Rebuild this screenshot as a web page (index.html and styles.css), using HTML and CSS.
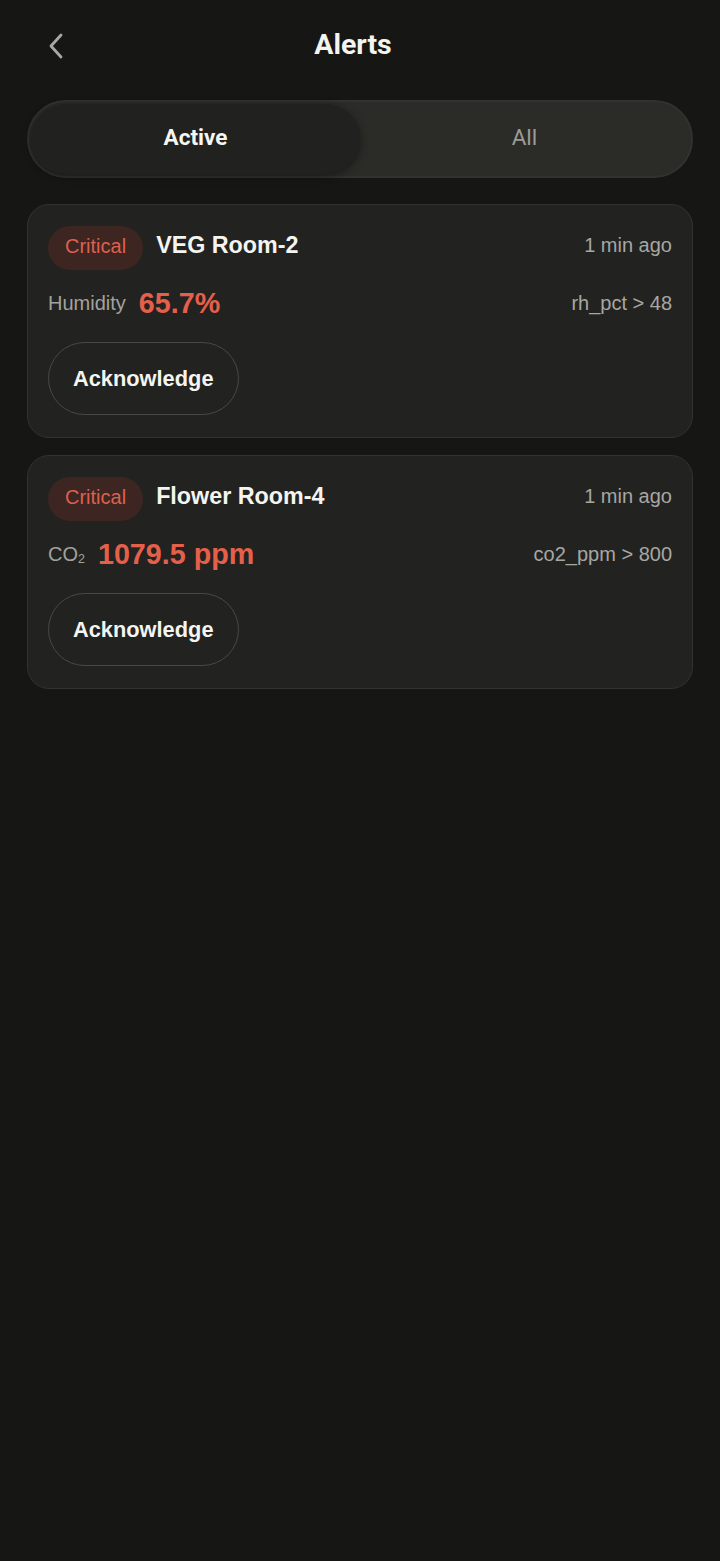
FILE: index.html
```html
<!DOCTYPE html>
<html lang="en">
<head>
    <meta charset="UTF-8">
    <meta name="viewport" content="width=device-width, initial-scale=1.0">
    <title>Alerts</title>
    <link rel="stylesheet" href="styles.css">
</head>
<body>
<header class="topbar">
    <button class="back" aria-label="Back">
        <svg width="18" height="26" viewBox="0 0 18 26"><path d="M14 2 L4 13 L14 24" fill="none" stroke="#a9a9a4" stroke-width="2.8" stroke-linecap="round" stroke-linejoin="round"/></svg>
    </button>
    <h1>Alerts</h1>
</header>

<div class="tabs">
    <div class="tab active">Active</div>
    <div class="tab">All</div>
</div>

<section class="alerts">
    <div class="card">
        <div class="card-head">
            <span class="badge">Critical</span>
            <span class="room">VEG Room-2</span>
            <span class="time">1 min ago</span>
        </div>
        <div class="card-metric">
            <span class="label">Humidity</span>
            <span class="value">65.7%</span>
            <span class="rule">rh_pct &gt; 48</span>
        </div>
        <button class="ack">Acknowledge</button>
    </div>

    <div class="card">
        <div class="card-head">
            <span class="badge">Critical</span>
            <span class="room">Flower Room-4</span>
            <span class="time">1 min ago</span>
        </div>
        <div class="card-metric">
            <span class="label">CO<sub>2</sub></span>
            <span class="value">1079.5 ppm</span>
            <span class="rule">co2_ppm &gt; 800</span>
        </div>
        <button class="ack">Acknowledge</button>
    </div>
</section>
</body>
</html>
```

FILE: styles.css
```css
body {
    margin: 0;
    background-color: #161614;
    color: #f2f2ee;
    font-family: 'Liberation Sans', Arial, sans-serif;
}

.topbar {
    position: relative;
    height: 88px;
    padding-right: 14px;
    display: flex;
    align-items: center;
    justify-content: center;
}

.topbar h1 {
    margin: 0;
    font-family: Roboto, sans-serif;
    font-size: 28.5px;
    font-weight: 700;
    color: #f4f4f0;
}

.back {
    position: absolute;
    left: 47px;
    top: 33px;
    background: none;
    border: none;
    padding: 0;
    cursor: pointer;
}

.tabs {
    margin: 12px 27px 0;
    height: 70px;
    border: 2px solid #32322e;
    border-radius: 40px;
    background: #2b2b27;
    display: flex;
    padding: 2px;
}

.tab {
    flex: 1;
    display: flex;
    align-items: center;
    justify-content: center;
    padding-bottom: 5px;
    font-family: Roboto, sans-serif;
    font-size: 22.5px;
    color: #9c9c97;
    border-radius: 36px;
}

.tab.active {
    background: #212120;
    color: #f6f6f2;
    font-weight: 700;
    box-shadow: 0 2px 8px rgba(0, 0, 0, 0.45);
}

.alerts {
    margin: 26px 27px 0;
    display: flex;
    flex-direction: column;
    gap: 17px;
}

.card {
    background: #222221;
    border: 1.5px solid #32322f;
    border-radius: 22px;
    padding: 21px 20px 22px 20px;
}

.card-head {
    display: flex;
    align-items: center;
    height: 44px;
}

.badge {
    height: 44px;
    box-sizing: border-box;
    padding: 0 17px 3px;
    border-radius: 22px;
    background: #3d2522;
    color: #df604d;
    font-size: 20px;
    display: flex;
    align-items: center;
}

.room {
    margin-left: 13px;
    padding-bottom: 6px;
    font-size: 23.3px;
    font-weight: 700;
    color: #f4f4f0;
}

.time,
.rule {
    margin-left: auto;
    font-size: 20px;
    color: #a7a7a2;
}

.time {
    padding-bottom: 5px;
}

.card-metric {
    display: flex;
    align-items: center;
    height: 34px;
    margin-top: 16px;
}

.label {
    font-size: 20px;
    color: #a2a29d;
}

.label sub {
    font-size: 12.5px;
    vertical-align: -2px;
}

.value {
    margin-left: 13px;
    font-size: 28.7px;
    font-weight: 700;
    color: #e5604a;
}

.ack {
    margin-top: 22px;
    height: 73px;
    padding: 0 24px;
    background: transparent;
    border: 1.5px solid #484845;
    border-radius: 37px;
    color: #f4f4f0;
    font-family: 'Liberation Sans', Arial, sans-serif;
    font-size: 21.8px;
    font-weight: 700;
    cursor: pointer;
}
```
